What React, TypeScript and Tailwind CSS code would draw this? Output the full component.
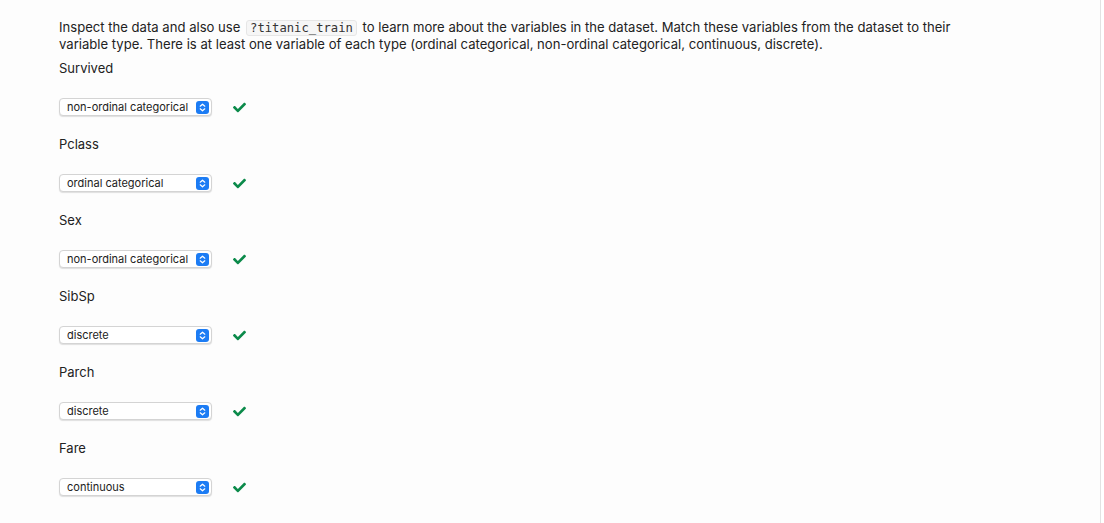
import { FaCheck } from "react-icons/fa";

const rows = [
  { name: "Survived", value: "non-ordinal categorical" },
  { name: "Pclass", value: "ordinal categorical" },
  { name: "Sex", value: "non-ordinal categorical" },
  { name: "SibSp", value: "discrete" },
  { name: "Parch", value: "discrete" },
  { name: "Fare", value: "continuous" },
];

const SelectBox = ({ value }: { value: string }) => (
  <div className="flex items-center justify-between w-[153px] h-[18px] pl-[7px] pr-[2px] bg-white rounded-[4px] border border-[#d4d4d4] shadow-[0_1px_1px_rgba(0,0,0,0.12)]">
    <span className="text-[11px] leading-none text-[#222]">{value}</span>
    <span className="flex items-center justify-center w-[13px] h-[13px] rounded-[3px] bg-[#1c7cf4]">
      <svg width="7" height="9" viewBox="0 0 7 9" fill="none">
        <path d="M1.2 3.2 L3.5 1.2 L5.8 3.2" stroke="white" strokeWidth="1.2" strokeLinecap="round" strokeLinejoin="round" />
        <path d="M1.2 5.8 L3.5 7.8 L5.8 5.8" stroke="white" strokeWidth="1.2" strokeLinecap="round" strokeLinejoin="round" />
      </svg>
    </span>
  </div>
);

export default function App() {
  return (
    <div className="w-[1104px] h-[523px] bg-white flex font-['Inter',sans-serif]">
      <div className="w-[1101px] h-full border-r border-[#e2e2e2] bg-[#fdfdfd] pl-[59px] pt-[19px]">
        <p className="text-[13.1px] leading-[16px] text-[#222] w-[920px]">
          Inspect the data and also use{" "}
          <code className="inline-block leading-[14px] font-['DejaVu_Sans_Mono',monospace] text-[12.2px] px-[3px] mx-[2px] bg-[#f6f6f6] border border-[#e6e6e6] rounded-[3px] text-[#333]">
            ?titanic_train
          </code>{" "}
          to learn more about the variables in the dataset. Match these variables from the dataset to their
          variable type. There is at least one variable of each type (ordinal categorical, non-ordinal categorical,
          continuous, discrete).
        </p>

        <div className="mt-[8px] flex flex-col">
          {rows.map((r, i) => (
            <div key={r.name} className={i > 0 ? "mt-[20px]" : ""}>
              <div className="text-[13px] leading-[16px] text-[#222]">{r.name}</div>
              <div className="mt-[22px] flex items-center gap-[20px]">
                <SelectBox value={r.value} />
                <FaCheck className="text-[#0b8a4a] w-[15px] h-[13px]" />
              </div>
            </div>
          ))}
        </div>
      </div>
    </div>
  );
}
